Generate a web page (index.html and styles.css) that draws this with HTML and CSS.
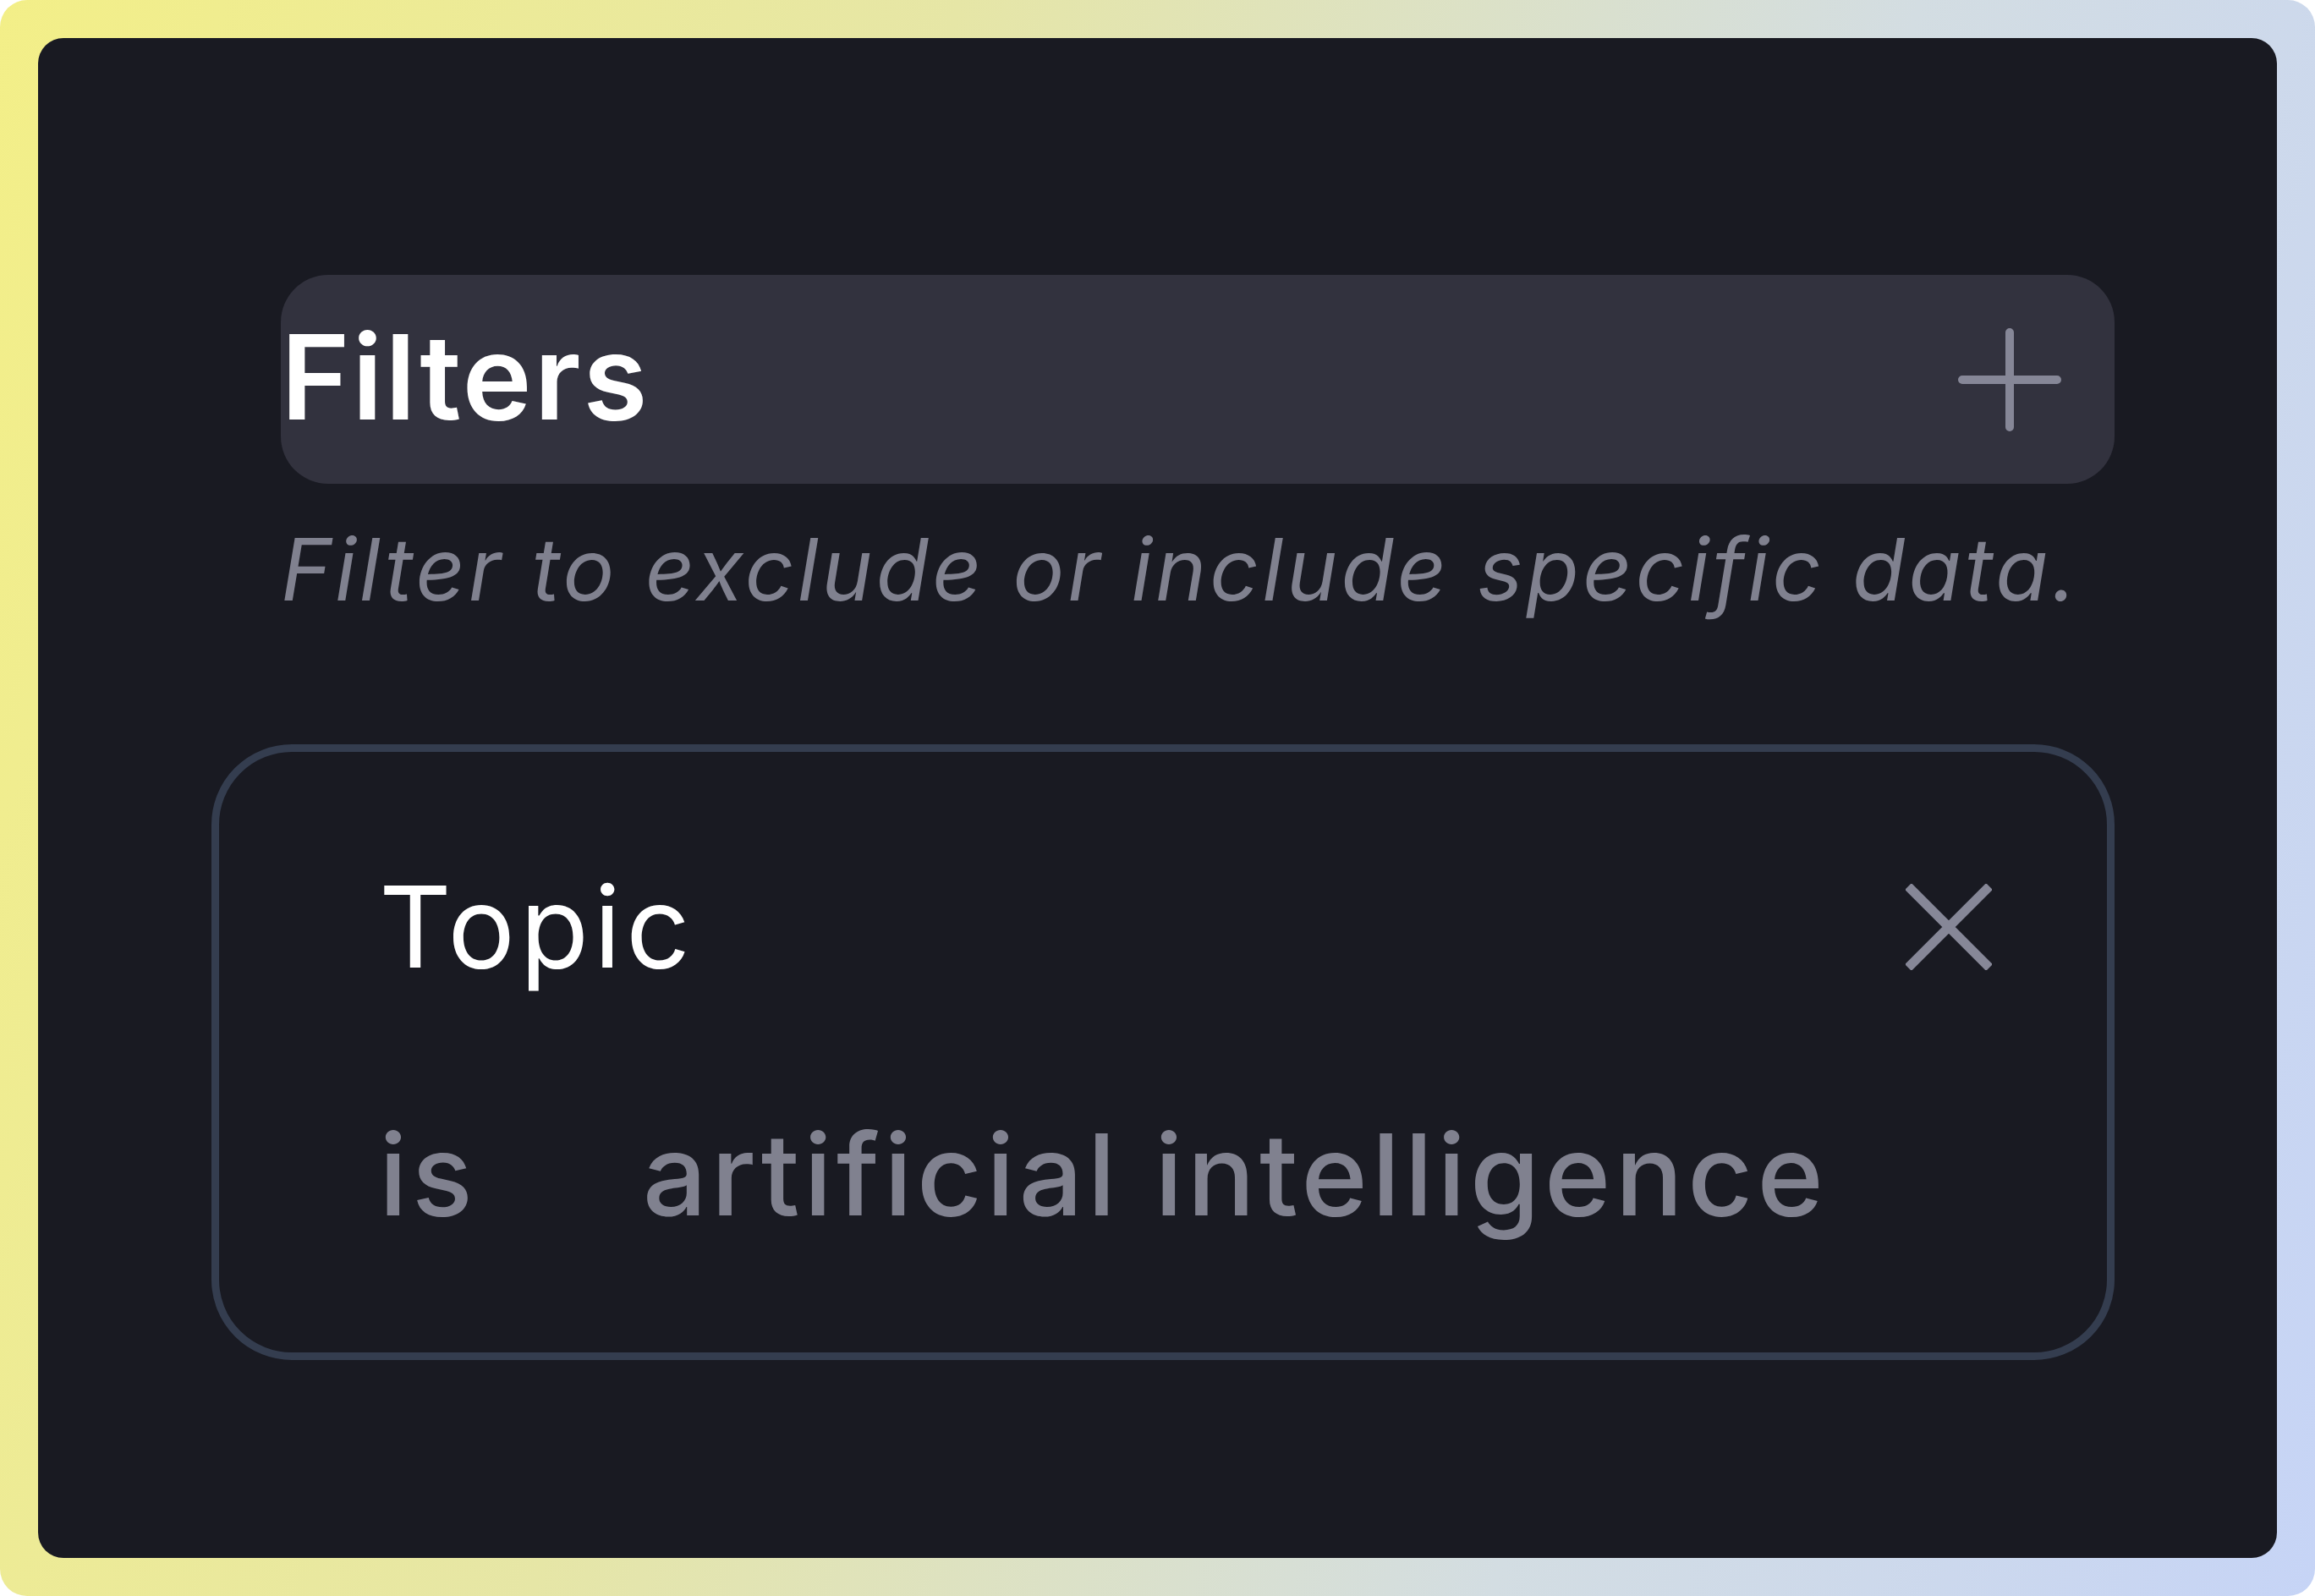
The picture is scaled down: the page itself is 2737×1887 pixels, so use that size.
FILE: index.html
```html
<!DOCTYPE html>
<html lang="en">
<head>
<meta charset="utf-8">
<title>Filters</title>
<link rel="stylesheet" href="styles.css">
</head>
<body>
<div class="frame">
  <div class="panel">
    <div class="header">
      <h1 class="title">Filters</h1>
      <svg class="plus" viewBox="0 0 122 122" aria-hidden="true">
        <path d="M61 5 V117 M5 61 H117" />
      </svg>
    </div>
    <p class="desc">Filter to exclude or include specific data.</p>
    <div class="card">
      <div class="card-top">
        <span class="field">Topic</span>
        <svg class="close" viewBox="0 0 102 102" aria-hidden="true">
          <path d="M3 3 L99 99 M99 3 L3 99" />
        </svg>
      </div>
      <div class="card-rule">
        <span class="op">is</span>
        <span class="value">artificial intelligence</span>
      </div>
    </div>
  </div>
</div>
</body>
</html>
```

FILE: styles.css
```css
html, body {
  margin: 0;
  padding: 0;
  background: #ffffff;
}

.frame {
  width: 2737px;
  height: 1887px;
  box-sizing: border-box;
  padding: 45px;
  border-radius: 32px;
  background: linear-gradient(105deg, #f3ef88 0%, #e6e6a6 35%, #d3dde2 70%, #c6d4f6 100%);
  font-family: Inter, "Noto Sans", "Liberation Sans", sans-serif;
}

.panel {
  height: 100%;
  box-sizing: border-box;
  background: #191a22;
  border-radius: 30px;
  padding: 280px 192px 0 287px;
}

.header {
  height: 247px;
  background: #32323e;
  border-radius: 56px;
  display: flex;
  align-items: center;
  justify-content: space-between;
  padding-right: 63px;
}

.title {
  margin: 0 0 7px 0;
  font-size: 139px;
  font-weight: 600;
  letter-spacing: 2.6px;
  line-height: 1;
  color: #ffffff;
}

.plus {
  width: 122px;
  height: 122px;
  fill: none;
  stroke: #868797;
  stroke-width: 10;
  stroke-linecap: round;
}

.desc {
  margin: 50px 0 0 0;
  font-size: 102px;
  font-style: italic;
  font-weight: 400;
  letter-spacing: 3.9px;
  line-height: 1;
  color: #80818f;
}

.card {
  margin: 156px 0 0 -82px;
  border: 9px solid #343d4f;
  border-radius: 95px;
  padding: 140px 136px 144px 189px;
}

.card-top {
  display: flex;
  align-items: center;
  justify-content: space-between;
  height: 133px;
}

.field {
  font-size: 133px;
  font-weight: 400;
  letter-spacing: 5.8px;
  line-height: 1;
  color: #ffffff;
}

.close {
  width: 102px;
  height: 102px;
  fill: none;
  stroke: #868797;
  stroke-width: 11;
}

.card-rule {
  margin-top: 159px;
  display: flex;
  gap: 196px;
  font-size: 134px;
  font-weight: 500;
  letter-spacing: 4.9px;
  line-height: 1;
  color: #80818f;
}
```
